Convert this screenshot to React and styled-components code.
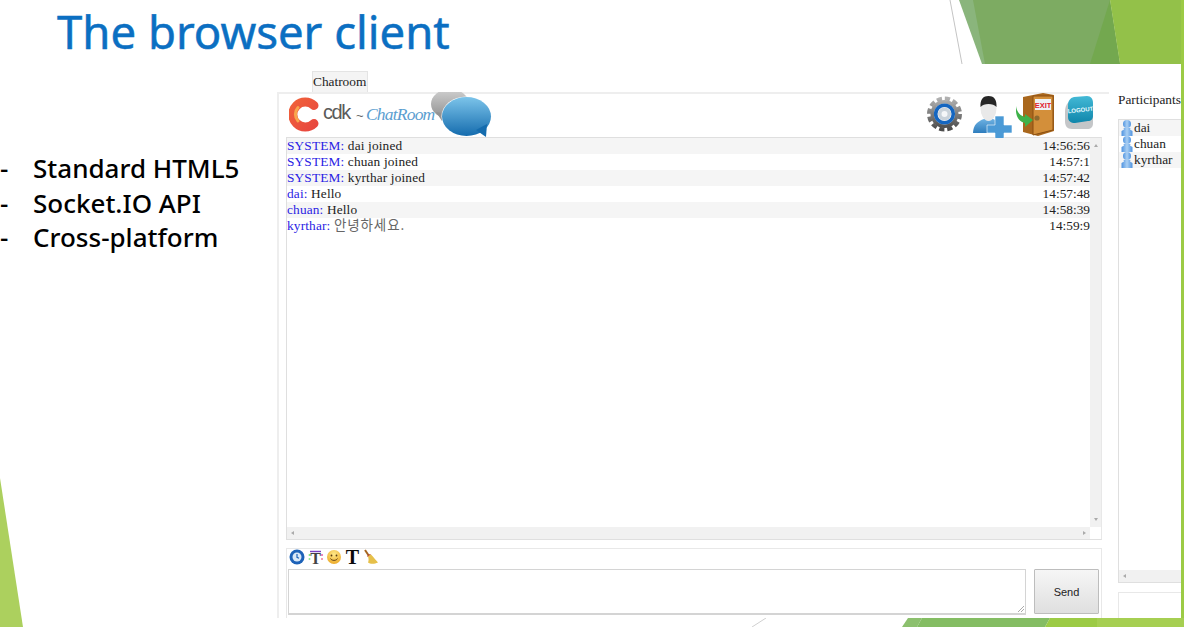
import React from 'react';
import styled, { createGlobalStyle } from 'styled-components';

const Global = createGlobalStyle`
  html, body { margin: 0; padding: 0; background: #fff; }
`;

const Page = styled.div`
  position: relative;
  width: 1184px;
  height: 627px;
  overflow: hidden;
  background: #fff;
  font-family: "Liberation Serif", serif;
`;

const Decor = styled.svg`
  position: absolute;
  left: 0;
  top: 0;
`;

const Title = styled.h1`
  position: relative;
  margin: 0;
  height: 64px;
  padding-left: 57px;
  font-family: "Noto Sans", sans-serif;
  font-weight: 400;
  font-size: 45.5px;
  line-height: 62px;
  color: #0b6fc2;
  -webkit-text-stroke: 0.5px #0b6fc2;
`;

const Body = styled.div`
  position: relative;
  display: flex;
  height: 554px;
`;

const Bullets = styled.ul`
  box-sizing: border-box;
  width: 265px;
  margin: 0;
  padding: 87px 0 0;
  list-style: none;
  font-family: "Noto Sans", sans-serif;
  font-weight: 500;
  font-size: 26px;
  line-height: 34.5px;
  color: #000;
`;

const Bullet = styled.li`
  display: flex;
  white-space: nowrap;
`;

const Dash = styled.span`
  width: 33px;
`;

const Shot = styled.div`
  box-sizing: border-box;
  width: 916px;
  padding: 7px 0 0 12px;
  background: #fff;
  overflow: hidden;
  font-size: 13.33px;
  line-height: 16px;
  color: #222;
`;

const Tab = styled.div`
  box-sizing: border-box;
  width: 56px;
  height: 21px;
  margin-left: 35px;
  padding: 2px 0 0;
  background: #f4f4f4;
  border: 1px solid #e4e4e4;
  border-bottom: 0;
  white-space: nowrap;
`;

const Workspace = styled.div`
  display: flex;
  height: 526px;
`;

const Frame = styled.div`
  box-sizing: border-box;
  flex: 0 0 832px;
  padding: 0 7px;
  border-top: 2px solid #eee;
  border-left: 2px solid #eee;
`;

const Header = styled.div`
  display: flex;
  justify-content: space-between;
  height: 43px;
  padding: 0 8px 0 3px;
`;

const Brand = styled.div`
  display: flex;
  align-items: flex-start;
  height: 43px;
`;

const Logo = styled.svg`
  flex: none;
  margin-top: 2px;
`;

const Cdk = styled.span`
  flex: 0 0 27px;
  min-width: 0;
  margin: 4px 0 0 3px;
  font-family: "Liberation Sans", sans-serif;
  font-size: 20px;
  line-height: 28px;
  letter-spacing: -1.4px;
  color: #5a5a5a;
`;

const Tilde = styled.span`
  flex: 0 0 7px;
  min-width: 0;
  margin: 10px 0 0 6px;
  font-family: "Liberation Sans", sans-serif;
  font-size: 13px;
  line-height: 24px;
  color: #666;
`;

const Script = styled.span`
  flex: 0 0 64px;
  min-width: 0;
  margin: 8px 0 0 3px;
  font-family: "Liberation Serif", serif;
  font-style: italic;
  font-size: 17.5px;
  line-height: 24px;
  letter-spacing: -0.8px;
  white-space: nowrap;
  color: #5b9ed0;
`;

const Bubbles = styled.svg`
  flex: none;
  position: relative;
  margin-top: -2px;
`;

const Tools = styled.div`
  display: flex;
`;

const Tool = styled.div`
  flex: 0 0 ${(p) => p.$w}px;
  height: 43px;
  margin-top: -2px;
`;

const ScrollPane = styled.div`
  box-sizing: border-box;
  display: grid;
  grid-template-columns: ${(p) => (p.$vertical ? '1fr 11px' : '1fr')};
  grid-template-rows: 1fr 12px;
  height: ${(p) => p.$h}px;
  border: 1px solid #dfdfdf;
  border-right-color: ${(p) => (p.$vertical ? '#e8e8e8' : 'transparent')};
  background: #fff;
`;

const Messages = styled.div`
  min-width: 0;
  overflow: hidden;
`;

const Row = styled.div`
  display: flex;
  justify-content: space-between;
  height: 16px;
  background: ${(p) => (p.$shade ? '#f5f5f5' : '#fff')};
  white-space: nowrap;
`;

const Line = styled.span`
  letter-spacing: 0.15px;
`;

const Who = styled.span`
  color: #2a22e4;
`;

const Korean = styled.span`
  font-family: "Noto Sans CJK KR", sans-serif;
  font-size: 13.5px;
  line-height: 12px;
  letter-spacing: 0.9px;
  color: #666;
`;

const VBar = styled.div`
  display: flex;
  flex-direction: column;
  justify-content: space-between;
  align-items: center;
  padding: 6px 0;
  background: #f1f1f1;
`;

const HBar = styled.div`
  display: flex;
  justify-content: space-between;
  align-items: center;
  padding: 0 4px;
  background: #f1f1f1;
`;

const Corner = styled.div`
  background: #fff;
`;

const Arrow = styled.i`
  display: block;
  width: 0;
  height: 0;
  border: 2.5px solid transparent;
  ${(p) => p.$dir === 'up' && 'border-top: 0; border-bottom: 3px solid #aaa;'}
  ${(p) => p.$dir === 'down' && 'border-bottom: 0; border-top: 3px solid #aaa;'}
  ${(p) => p.$dir === 'left' && 'border-left: 0; border-right: 3px solid #aaa;'}
  ${(p) => p.$dir === 'right' && 'border-right: 0; border-left: 3px solid #aaa;'}
`;

const InputBox = styled.div`
  box-sizing: border-box;
  height: 72px;
  margin-top: 8px;
  padding-left: 1px;
  border: 1px solid #e8e8e8;
  border-bottom: 0;
`;

const IconBar = styled.div`
  display: flex;
  gap: 2.5px;
  height: 20px;
  padding-left: 1px;
  align-items: flex-start;
`;

const BoldT = styled.span`
  flex: 0 0 16px;
  height: 16px;
  text-align: center;
  font-weight: 700;
  font-size: 20px;
  line-height: 17px;
  color: #0a0a0a;
`;

const InputRow = styled.div`
  display: flex;
  gap: 8px;
`;

const Field = styled.div`
  position: relative;
  box-sizing: border-box;
  width: 738px;
  height: 46px;
  border: 1px solid #d4d4d4;
  border-width: 1px 1px 2px 1px;
  background: #fff;
`;

const Grip = styled.svg`
  position: absolute;
  right: 0;
  bottom: 0;
`;

const Send = styled.button`
  box-sizing: border-box;
  width: 65px;
  height: 45px;
  padding: 0;
  border: 1px solid #bdbdbd;
  border-radius: 1px;
  background: linear-gradient(#f6f6f6, #dfdfdf);
  font-family: "Liberation Sans", sans-serif;
  font-size: 11px;
  color: #222;
`;

const Sidebar = styled.div`
  flex: 0 0 90px;
  margin-left: 9px;
`;

const SideLabel = styled.div`
  height: 27px;
  white-space: nowrap;
`;

const Person = styled.div`
  display: flex;
  align-items: center;
  height: 16px;
  padding-left: 2px;
  gap: 1px;
  background: ${(p) => (p.$shade ? '#f5f5f5' : '#fff')};
`;

const StatusBox = styled.div`
  height: 40px;
  margin-top: 9px;
  border: 1px solid #e8e8e8;
`;

const PersonIcon = () => (
  <svg width="12" height="16" viewBox="0 0 12 16">
    <defs>
      <linearGradient id="pawn" x1="0" y1="0" x2="1" y2="0">
        <stop offset="0" stopColor="#4f93e0" />
        <stop offset="0.5" stopColor="#a9cff3" />
        <stop offset="1" stopColor="#4f93e0" />
      </linearGradient>
    </defs>
    <ellipse cx="6" cy="4" rx="4" ry="4" fill="url(#pawn)" />
    <path d="M2.500 8h7l-.5 1.500 2.500 1.500v5H.5v-5L3 9.500z" fill="url(#pawn)" />
  </svg>
);

const GearIcon = () => (
  <svg width="36" height="43" viewBox="0 0 36 43">
    <defs>
      <linearGradient id="gearGrey" x1="0" y1="0" x2="0" y2="1">
        <stop offset="0" stopColor="#b0b0b0" />
        <stop offset="1" stopColor="#4c4c4c" />
      </linearGradient>
    </defs>
    <circle cx="17.500" cy="22" r="15.500" fill="none" stroke="url(#gearGrey)" strokeWidth="4" strokeDasharray="5.200 2.900" />
    <circle cx="17.500" cy="22" r="14" fill="url(#gearGrey)" />
    <circle cx="17.500" cy="22" r="10.500" fill="#f2f4f6" />
    <circle cx="17.500" cy="22" r="8.800" fill="none" stroke="#1566c0" strokeWidth="3.600" />
    <circle cx="17.500" cy="22" r="6.500" fill="#c9d2da" />
    <circle cx="17.500" cy="22" r="3" fill="#f4f6f8" />
  </svg>
);

const UserIcon = () => (
  <svg width="40" height="47" viewBox="0 0 40 47">
    <defs>
      <linearGradient id="userBlue" x1="0" y1="0" x2="0" y2="1">
        <stop offset="0" stopColor="#6db1e2" />
        <stop offset="1" stopColor="#2e7dbd" />
      </linearGradient>
    </defs>
    <path d="M0 41c0-8 5-12 11-14h9c5 2 8 5 8 14z" fill="url(#userBlue)" />
    <ellipse cx="15.500" cy="16.500" rx="8" ry="12.500" fill="#e9e9e9" />
    <path d="M7.500 15c-.5-8 3-11 8-11s8.500 3 8 11c-3-4-13-4-16 0z" fill="#262626" />
    <path d="M22 24h9v9h8v8h-8v6h-9v-6h-8v-8h8z" fill="#4b9ad6" stroke="#fff" strokeWidth="0.600" />
  </svg>
);

const DoorIcon = () => (
  <svg width="40" height="45" viewBox="0 0 40 45">
    <path d="M7 5 L27 1 L38 3 V39 L22 44 L7 40z" fill="#a9671d" />
    <path d="M17 4 L37 4 V38 L17 43z" fill="#d38f3a" stroke="#8a4f12" strokeWidth="1" />
    <rect x="19" y="7" width="16" height="11" fill="#eef2f5" />
    <text x="27" y="16" textAnchor="middle" fontFamily="Liberation Sans, sans-serif" fontWeight="700" fontSize="7.500" fill="#e0202c">EXIT</text>
    <circle cx="21" cy="26" r="2.600" fill="#8e6a2e" />
    <path d="M0 14c1 7 5 10 9 11v-3l8 6-8 7v-4c-6-1-10-7-9-17z" fill="#3fb24a" />
  </svg>
);

const LogoutIcon = () => (
  <svg width="31" height="43" viewBox="0 0 31 43">
    <defs>
      <linearGradient id="tile" x1="0" y1="0" x2="0" y2="1">
        <stop offset="0" stopColor="#43b9d6" />
        <stop offset="1" stopColor="#0f86ab" />
      </linearGradient>
    </defs>
    <path d="M2 20c0-8 4-12 10-12h10c5 0 8 3 8 8v15c0 4-2 6-6 6H9c-5 0-7-3-7-8z" fill="#c4c6c8" />
    <path d="M5 13c0-4 2-7 6-8l13-1c4 0 6 3 6 7v13c0 3-2 5-5 5l-13 2c-4 0-7-2-7-6z" fill="url(#tile)" />
    <text x="17.500" y="20" textAnchor="middle" fontFamily="Liberation Sans, sans-serif" fontWeight="700" fontSize="6" fill="#e8fbff" transform="rotate(-6 17 18)">LOGOUT</text>
  </svg>
);

const ClockIcon = () => (
  <svg width="16" height="16" viewBox="0 0 16 16">
    <circle cx="8" cy="8" r="7.500" fill="#1d62b8" />
    <circle cx="8" cy="8" r="4.500" fill="#d9e8f7" />
    <path d="M8 5v3.300l2 1" fill="none" stroke="#1d62b8" strokeWidth="1.200" />
  </svg>
);

const ColorTextIcon = () => (
  <svg width="16" height="16" viewBox="0 0 16 16">
    <text x="7.500" y="14.500" textAnchor="middle" fontFamily="Liberation Serif, serif" fontWeight="700" fontSize="16" fill="#444">T</text>
    <circle cx="1.500" cy="6" r="1" fill="#7be07b" />
    <circle cx="1.500" cy="10" r="1" fill="#8fe88f" />
    <path d="M2 2.500h11" stroke="#7a3fc0" strokeWidth="1.400" />
    <circle cx="14" cy="6" r="1" fill="#e65aa8" />
    <circle cx="14" cy="10" r="1" fill="#f07a9a" />
  </svg>
);

const SmileIcon = () => (
  <svg width="16" height="16" viewBox="0 0 16 16">
    <defs>
      <radialGradient id="smile" cx="0.5" cy="0.3" r="0.8">
        <stop offset="0" stopColor="#ffe98a" />
        <stop offset="1" stopColor="#eaa21c" />
      </radialGradient>
    </defs>
    <circle cx="8" cy="8" r="7" fill="url(#smile)" />
    <circle cx="5.500" cy="6.500" r="0.900" fill="#5a3a10" />
    <circle cx="10.500" cy="6.500" r="0.900" fill="#5a3a10" />
    <path d="M4.500 9.500c1 2.500 6 2.500 7 0" fill="none" stroke="#5a3a10" strokeWidth="0.900" />
  </svg>
);

const BroomIcon = () => (
  <svg width="16" height="16" viewBox="0 0 16 16">
    <path d="M2 1l4 6" stroke="#a5651f" strokeWidth="2" />
    <path d="M4 7l3-2 1 1-3 2z" fill="#b8322a" />
    <path d="M5 7l3-1.500c3 3 5 6 7 8-4 2-8 1.500-10 0 1-2 .5-4 0-6.500z" fill="#e6c04a" />
  </svg>
);

const rows = [
  { who: 'SYSTEM:', text: 'dai joined', time: '14:56:56' },
  { who: 'SYSTEM:', text: 'chuan joined', time: '14:57:1' },
  { who: 'SYSTEM:', text: 'kyrthar joined', time: '14:57:42' },
  { who: 'dai:', text: 'Hello', time: '14:57:48' },
  { who: 'chuan:', text: 'Hello', time: '14:58:39' },
  { who: 'kyrthar:', text: '안녕하세요.', time: '14:59:9', korean: true },
];

const people = ['dai', 'chuan', 'kyrthar'];

export default function App() {
  return (
    <Page>
      <Global />
      <Decor width="1184" height="627" viewBox="0 0 1184 627">
        <polygon points="959,0 974,0 986,64 982,64" fill="#8ab57c" />
        <polygon points="973,0 1110,0 1120,64 985,64" fill="#7dab62" />
        <polygon points="1110,0 1120,64 1090,64" fill="#73a84f" />
        <polygon points="1110,0 1184,0 1184,64 1120,64" fill="#93c149" />
        <line x1="950" y1="0" x2="962" y2="64" stroke="#c4c4c4" strokeWidth="1" />
        <polygon points="0,478 23,627 0,627" fill="#acd05e" />
        <rect x="1181" y="0" width="3" height="627" fill="#9ccb45" />
        <polygon points="908,618 922,618 917,627 902,627" fill="#8cc06e" />
        <polygon points="922,618 1050,618 1045,627 917,627" fill="#84bd63" />
        <polygon points="1050,618 1097,618 1097,627 1045,627" fill="#9ccb45" />
        <rect x="1097" y="618" width="87" height="9" fill="#a6cf52" />
        <line x1="752" y1="627" x2="766" y2="618" stroke="#d0d0d0" strokeWidth="1" />
      </Decor>
      <Title>The browser client</Title>
      <Body>
        <Bullets>
          {['Standard HTML5', 'Socket.IO API', 'Cross-platform'].map((b) => (
            <Bullet key={b}>
              <Dash>-</Dash>
              {b}
            </Bullet>
          ))}
        </Bullets>
        <Shot>
          <Tab>Chatroom</Tab>
          <Workspace>
            <Frame>
              <Header>
                <Brand>
                  <Logo width="31" height="38" viewBox="0 0 31 38">
                    <defs>
                      <linearGradient id="cdkC" x1="0" y1="0" x2="1" y2="1">
                        <stop offset="0" stopColor="#f0603a" />
                        <stop offset="1" stopColor="#e8483f" />
                      </linearGradient>
                    </defs>
                    <path d="M25 9.500A12.500 12.500 0 1 0 25 27.500" fill="none" stroke="url(#cdkC)" strokeWidth="9" strokeLinecap="round" />
                    <path d="M9 11.500A10 10 0 0 0 9 25" fill="none" stroke="#f9a64c" strokeWidth="3" strokeLinecap="round" />
                  </Logo>
                  <Cdk>cdk</Cdk>
                  <Tilde>~</Tilde>
                  <Script>ChatRoom</Script>
                  <Bubbles width="62" height="45" viewBox="0 0 62 45">
                    <defs>
                      <linearGradient id="bubbleBlue" x1="0" y1="0" x2="0" y2="1">
                        <stop offset="0" stopColor="#7cc4ea" />
                        <stop offset="1" stopColor="#156cae" />
                      </linearGradient>
                      <linearGradient id="bubbleGrey" x1="0" y1="0" x2="0" y2="1">
                        <stop offset="0" stopColor="#d0d0d0" />
                        <stop offset="1" stopColor="#8f8f8f" />
                      </linearGradient>
                    </defs>
                    <ellipse cx="20" cy="12" rx="19" ry="15" fill="url(#bubbleGrey)" />
                    <path d="M6 20l6 9 6-7z" fill="#929292" />
                    <ellipse cx="36.500" cy="24.500" rx="25" ry="20" fill="#fff" />
                    <ellipse cx="36.500" cy="24.500" rx="24.500" ry="19.500" fill="url(#bubbleBlue)" />
                    <path d="M46 38l10 7 1-13z" fill="#156cae" />
                  </Bubbles>
                </Brand>
                <Tools>
                  <Tool $w={46}><GearIcon /></Tool>
                  <Tool $w={43}><UserIcon /></Tool>
                  <Tool $w={47}><DoorIcon /></Tool>
                  <Tool $w={31}><LogoutIcon /></Tool>
                </Tools>
              </Header>
              <ScrollPane $vertical $h={403}>
                <Messages>
                  {rows.map((r, i) => (
                    <Row key={r.time} $shade={i % 2 === 0}>
                      <Line>
                        <Who>{r.who}</Who> {r.korean ? <Korean>{r.text}</Korean> : r.text}
                      </Line>
                      <span>{r.time}</span>
                    </Row>
                  ))}
                </Messages>
                <VBar>
                  <Arrow $dir="up" />
                  <Arrow $dir="down" />
                </VBar>
                <HBar>
                  <Arrow $dir="left" />
                  <Arrow $dir="right" />
                </HBar>
                <Corner />
              </ScrollPane>
              <InputBox>
                <IconBar>
                  <ClockIcon />
                  <ColorTextIcon />
                  <SmileIcon />
                  <BoldT>T</BoldT>
                  <BroomIcon />
                </IconBar>
                <InputRow>
                  <Field>
                    <Grip width="8" height="8" viewBox="0 0 8 8">
                      <path d="M1 7l6-6M4 7l3-3" stroke="#aaa" strokeWidth="1" />
                    </Grip>
                  </Field>
                  <Send>Send</Send>
                </InputRow>
              </InputBox>
            </Frame>
            <Sidebar>
              <SideLabel>Participants</SideLabel>
              <ScrollPane $h={464}>
                <Messages>
                  {people.map((p, i) => (
                    <Person key={p} $shade={i % 2 === 0}>
                      <PersonIcon />
                      {p}
                    </Person>
                  ))}
                </Messages>
                <HBar>
                  <Arrow $dir="left" />
                </HBar>
              </ScrollPane>
              <StatusBox />
            </Sidebar>
          </Workspace>
        </Shot>
      </Body>
    </Page>
  );
}
